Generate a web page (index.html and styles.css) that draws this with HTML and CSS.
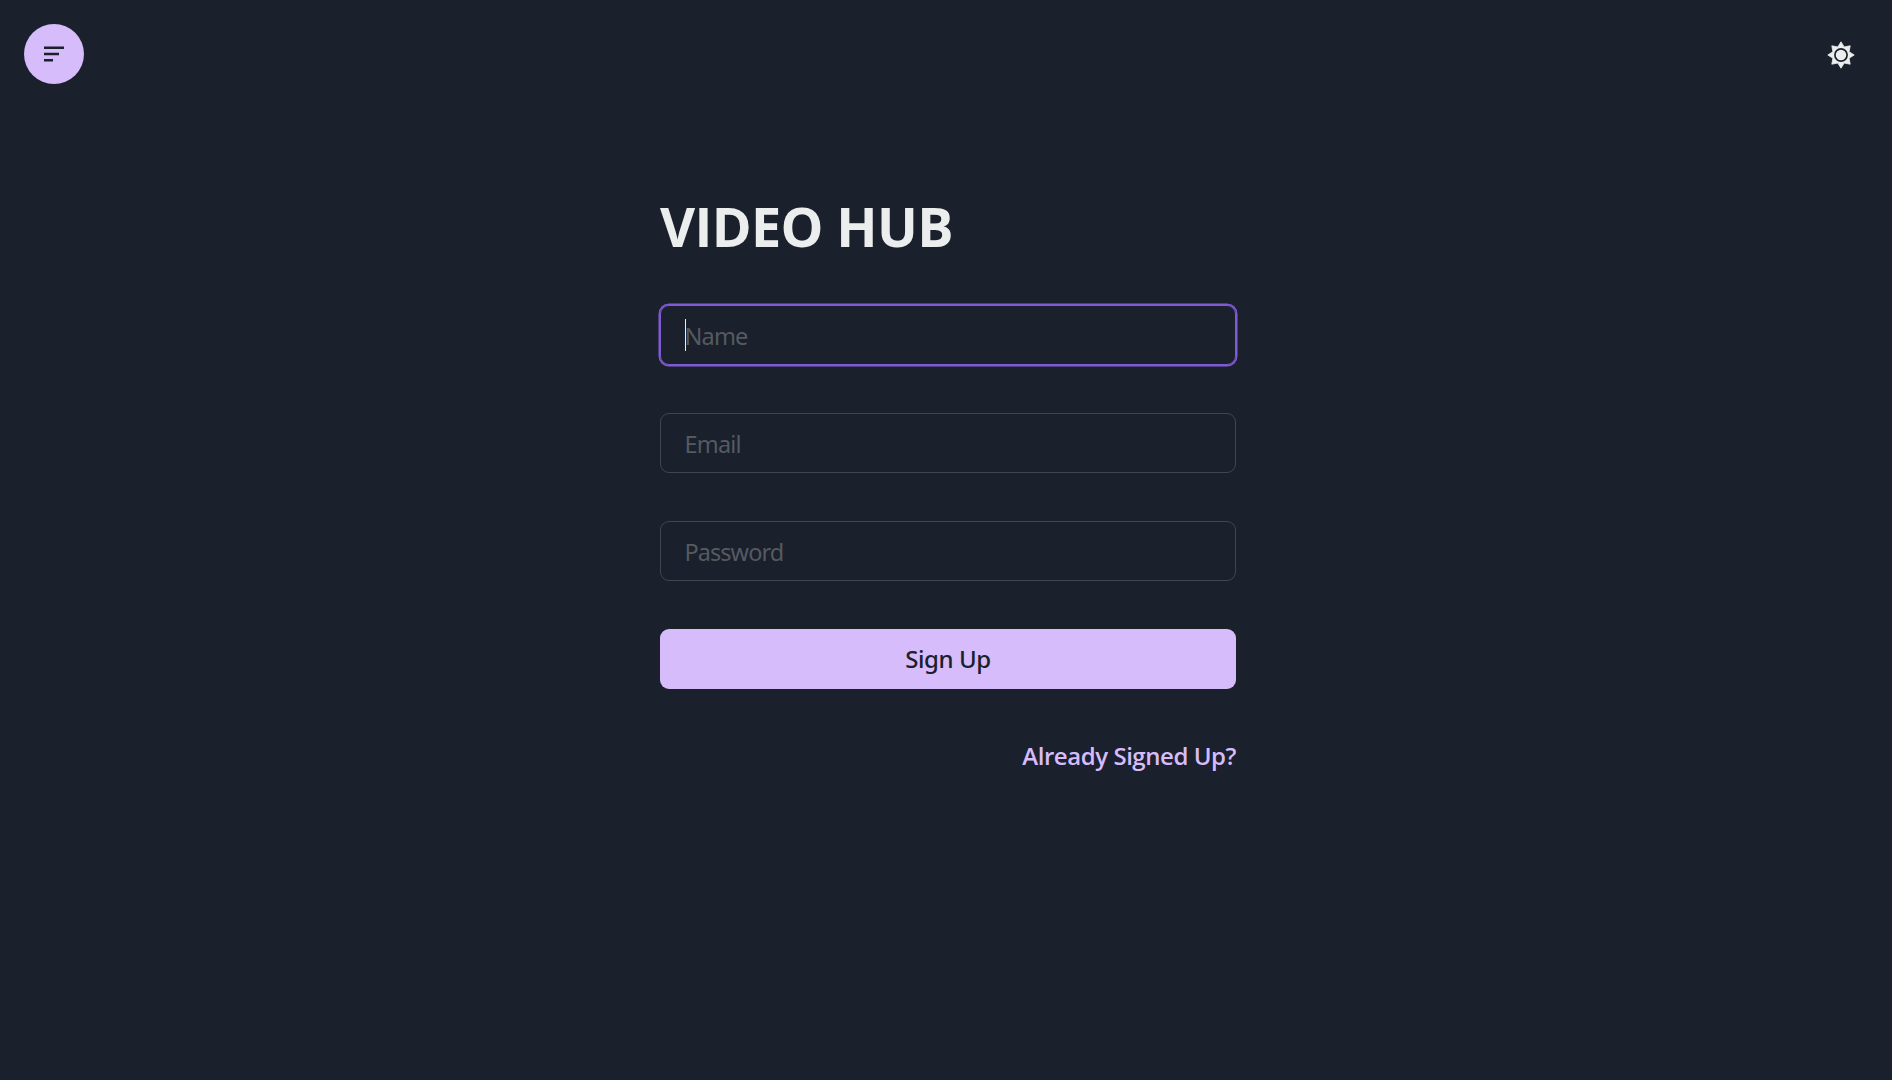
FILE: index.html
```html
<!DOCTYPE html>
<html lang="en">
<head>
<meta charset="utf-8">
<title>Video Hub</title>
<link rel="stylesheet" href="styles.css">
</head>
<body>
<header class="topbar">
  <button class="menu-button" aria-label="Open menu">
    <svg width="20" height="16" viewBox="0 0 20 16" fill="currentColor"><path d="M0 .4h20v2.5H0zM0 6.75h15v2.5H0zM0 13.1h9v2.5H0z"/></svg>
  </button>
  <button class="theme-button" aria-label="Toggle theme">
    <svg width="28" height="28" viewBox="-14 -14 28 28" fill="currentColor"><path stroke="currentColor" stroke-width=".8" stroke-linejoin="round" d="M0-13.2L3.2-8.1L9.2-9.2L8.1-3.2L13.2 0L8.1 3.2L9.2 9.2L3.2 8.1L0 13.2L-3.2 8.1L-9.2 9.2L-8.1 3.2L-13.2 0L-8.1-3.2L-9.2-9.2L-3.2-8.1Z"/><circle class="sun-ring" r="6.1"/></svg>
  </button>
</header>
<main class="signup">
  <h1 class="title">VIDEO HUB</h1>
  <form class="form">
    <div class="field focused"><span class="caret"></span><span class="name">Name</span></div>
    <div class="field"><span class="email">Email</span></div>
    <div class="field"><span class="password">Password</span></div>
    <button class="submit" type="button"><span>Sign Up</span></button>
  </form>
  <a class="login-link">Already Signed Up?</a>
</main>
</body>
</html>
```
FILE: styles.css
```css
* { box-sizing: border-box; }
body {
  margin: 0;
  min-height: 100vh;
  background: #1a202c;
  color: #eceeee;
  font-family: "Open Sans", "Noto Sans", sans-serif;
  font-size: 24px;
  line-height: 36px;
}
button { border: 0; padding: 0; font: inherit; }
.topbar {
  display: flex;
  justify-content: space-between;
  padding: 24px 20.7px 0 24px;
}
.menu-button, .theme-button {
  width: 60px;
  height: 60px;
  display: flex;
  align-items: center;
  justify-content: center;
}
.menu-button { border-radius: 50%; background: #d6bcfa; color: #1a202c; }
.theme-button { background: none; color: #eceeee; padding-top: 1px; }
.sun-ring { fill: currentColor; stroke: #1a202c; stroke-width: 1.7; }
.signup {
  width: 576px;
  margin: 106px 0 0 660px;
  display: flex;
  flex-direction: column;
}
.title {
  margin: 0;
  font-size: 54px;
  line-height: 72px;
  font-weight: 700;
  letter-spacing: -.65px;
  white-space: nowrap;
}
.form {
  margin-top: 43px;
  display: flex;
  flex-direction: column;
  gap: 48px;
}
.field {
  position: relative;
  height: 60px;
  padding: 12px 24px 0 23.5px;
  border: 1px solid #41454f;
  border-radius: 9px;
  color: #555a60;
  font-family: "Noto Sans", sans-serif;
  font-size: 23.5px;
}
.focused { border-color: #805ad5; box-shadow: 0 0 0 1.5px #805ad5; }
.caret {
  position: absolute;
  left: 24px;
  top: 13px;
  width: 1px;
  height: 32px;
  background: #eceeee;
}
.name { letter-spacing: -.8px; }
.email { letter-spacing: -.8px; }
.password { letter-spacing: -.95px; }
.submit {
  height: 60px;
  border-radius: 9px;
  background: #d6bcfa;
  color: #1a202c;
  font-family: "Noto Sans", sans-serif;
  font-weight: 500;
  letter-spacing: -.4px;
}
.login-link {
  align-self: flex-end;
  margin-top: 49px;
  color: #d6bcfa;
  font-weight: 600;
  letter-spacing: -.45px;
}
```
